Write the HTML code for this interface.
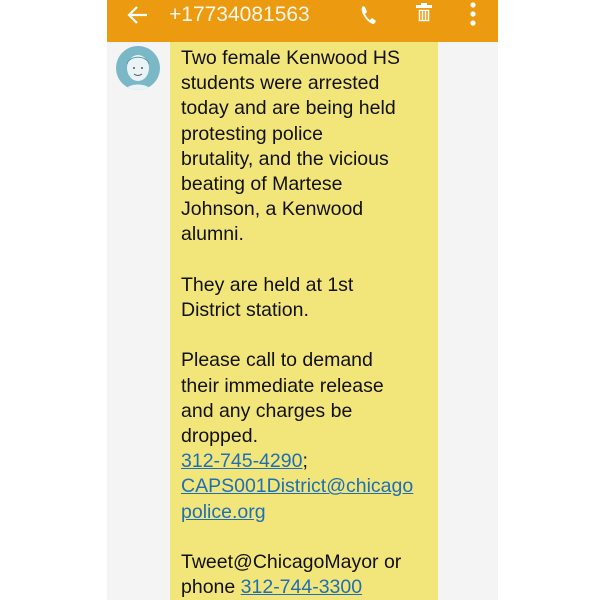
<!DOCTYPE html>
<html><head><meta charset="utf-8"><style>
html,body{margin:0;padding:0;width:600px;height:600px;background:#fff;overflow:hidden}
.app{position:absolute;left:107px;top:0;width:391px;height:600px;background:#f4f4f4}
.bar{position:absolute;left:0;top:0;width:391px;height:42px;background:#ec9a0f;color:#fff;font-family:"Liberation Sans",sans-serif}
.num{position:absolute;left:62px;top:3px;font-size:21px;color:#fff8ec}
.bub{position:absolute;left:63px;top:42px;width:268px;height:558px;background:#f2e57a}
.txt{position:absolute;left:74px;top:46px;font-family:"Liberation Sans",sans-serif;font-size:19.5px;line-height:25.2px;color:#111;white-space:pre}
a{color:#1f6fb5;text-decoration:underline}
.av{position:absolute;left:9px;top:46px;width:44px;height:44px;border-radius:50%;background:#7ab7c7;overflow:hidden}
</style></head><body>
<div class="app">
<div class="bar">
<svg style="position:absolute;left:20px;top:4px" width="22" height="22" viewBox="0 0 22 22"><path d="M20 11H3M10 3L2 11L10 19" stroke="#fff" stroke-width="2.2" fill="none"/></svg>
<div class="num">+17734081563</div>
<svg style="position:absolute;left:252px;top:3px" width="20" height="22" viewBox="0 0 20 22"><path d="M4 3c-2 2-2 5 1 10s7 8 10 8l2-3-4-3-2 2c-2-1-4-4-5-6l2-2-2-5z" fill="#fff"/></svg>
<svg style="position:absolute;left:307px;top:2px" width="20" height="22" viewBox="0 0 20 22"><rect x="2" y="3" width="16" height="3" fill="#fff"/><rect x="7" y="1" width="6" height="3" fill="#fff"/><path d="M4 7h12v13H4z M7 9v9M10 9v9M13 9v9" fill="#fff" stroke="#ec9a0f" stroke-width="1.5"/></svg>
<svg style="position:absolute;left:362px;top:1px" width="8" height="26"><circle cx="4" cy="4" r="2.6" fill="#fff"/><circle cx="4" cy="13" r="2.6" fill="#fff"/><circle cx="4" cy="22" r="2.6" fill="#fff"/></svg>
</div>
<div class="av"><svg width="44" height="44"><ellipse cx="22" cy="22" rx="11" ry="13" fill="#eaf4f6"/><path d="M8 46c2-10 26-10 28 0z" fill="#eaf4f6"/><path d="M11 18c2-9 20-9 22 0" stroke="#5a9aaa" fill="none"/><circle cx="18" cy="22" r="1" fill="#555"/><circle cx="26" cy="22" r="1" fill="#555"/><path d="M18 28q4 3 8 0" stroke="#555" fill="none"/></svg></div>
<div class="bub"></div>
<div class="txt">Two female Kenwood HS
students were arrested
today and are being held
protesting police
brutality, and the vicious
beating of Martese
Johnson, a Kenwood
alumni.

They are held at 1st
District station.

Please call to demand
their immediate release
and any charges be
dropped.
<a>312-745-4290</a>;
<a>CAPS001District@chicago</a>
<a>police.org</a>

Tweet@ChicagoMayor or
phone <a>312-744-3300</a></div>
</div>
</body></html>
